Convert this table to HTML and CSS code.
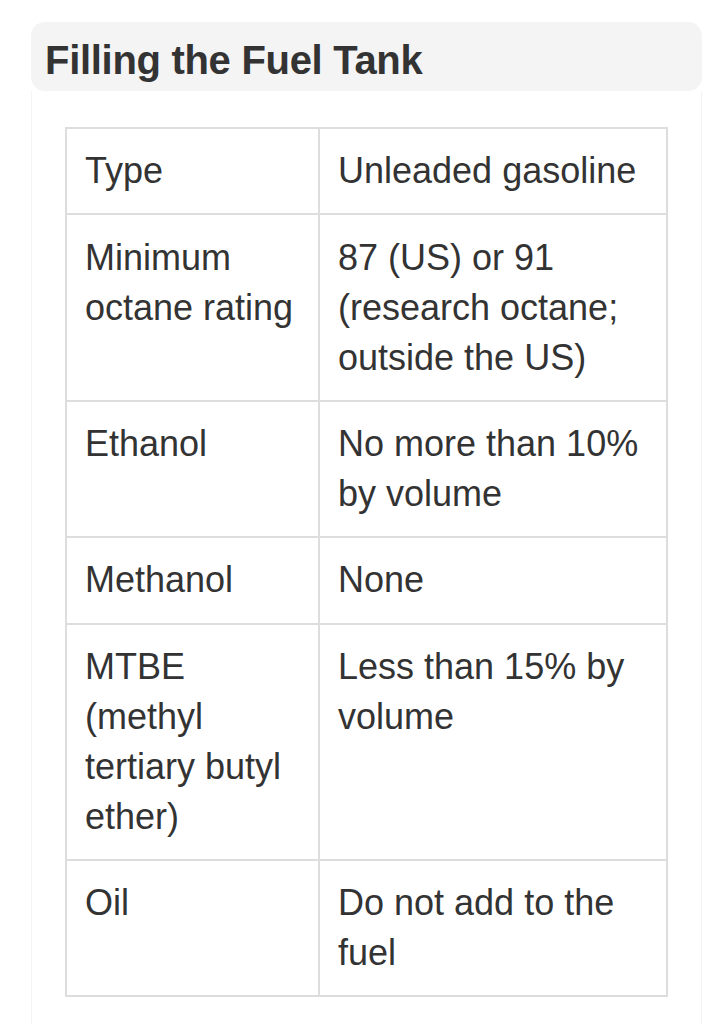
FILE: index.html
```html
<!DOCTYPE html>
<html lang="en">
<head>
<meta charset="utf-8">
<title>Filling the Fuel Tank</title>
<link rel="stylesheet" href="styles.css">
</head>
<body>
<div class="section">
  <h2 class="section-title">Filling the Fuel Tank</h2>
  <div class="section-body">
    <table class="spec-table">
      <colgroup>
        <col class="col-label">
        <col class="col-value">
      </colgroup>
      <tbody>
        <tr><td>Type</td><td>Unleaded gasoline</td></tr>
        <tr><td>Minimum octane rating</td><td>87 (US) or 91 (research octane; outside the US)</td></tr>
        <tr><td>Ethanol</td><td>No more than 10% by volume</td></tr>
        <tr><td>Methanol</td><td>None</td></tr>
        <tr><td>MTBE (methyl tertiary butyl ether)</td><td>Less than 15% by volume</td></tr>
        <tr><td>Oil</td><td>Do not add to the fuel</td></tr>
      </tbody>
    </table>
  </div>
</div>
</body>
</html>
```

FILE: styles.css
```css
html, body {
  margin: 0;
  padding: 0;
  background: #ffffff;
}

body {
  font-family: "Liberation Sans", Arial, Helvetica, sans-serif;
  color: #333333;
}

.section {
  margin: 22px 21px 0 31px;
}

.section-title {
  margin: 0;
  padding: 16px 14px 8px 14px;
  background: #f4f4f4;
  border-radius: 14px;
  font-size: 40px;
  line-height: 45px;
  font-weight: bold;
  color: #333333;
  letter-spacing: -0.3px;
}

.section-body {
  border-left: 1px solid #f4f4f4;
  border-right: 1px solid #f4f4f4;
  padding: 36px 33px 40px 33px;
}

.spec-table {
  border-collapse: collapse;
  table-layout: fixed;
  width: 603px;
  font-size: 36px;
  line-height: 50px;
  color: #333333;
}

.col-label {
  width: 253px;
}

.spec-table td {
  border: 2px solid #dddddd;
  padding: 17.2px 17px 17.2px 18px;
  vertical-align: top;
}
```
